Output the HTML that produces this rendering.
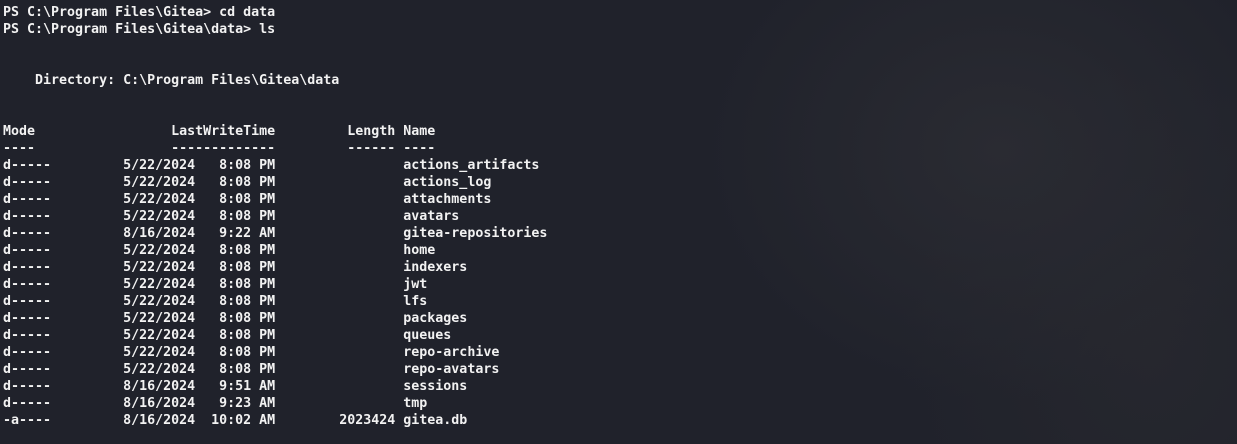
<html><head><style>
body{margin:0;width:1237px;height:444px;overflow:hidden;background:#20222b;
background-image:radial-gradient(ellipse 300px 250px at 1000px 150px,#2a2b32,rgba(0,0,0,0)),radial-gradient(ellipse 250px 300px at 1150px 350px,#26272e,rgba(0,0,0,0));}
pre{margin:0;position:absolute;left:3px;top:4px;font-family:"DejaVu Sans Mono","Liberation Mono",monospace;font-weight:bold;font-size:13.3px;line-height:17px;color:#f2f2f2;}
</style></head><body><pre>PS C:\Program Files\Gitea&gt; cd data
PS C:\Program Files\Gitea\data&gt; ls


    Directory: C:\Program Files\Gitea\data


Mode                 LastWriteTime         Length Name
----                 -------------         ------ ----
d-----         5/22/2024   8:08 PM                actions_artifacts
d-----         5/22/2024   8:08 PM                actions_log
d-----         5/22/2024   8:08 PM                attachments
d-----         5/22/2024   8:08 PM                avatars
d-----         8/16/2024   9:22 AM                gitea-repositories
d-----         5/22/2024   8:08 PM                home
d-----         5/22/2024   8:08 PM                indexers
d-----         5/22/2024   8:08 PM                jwt
d-----         5/22/2024   8:08 PM                lfs
d-----         5/22/2024   8:08 PM                packages
d-----         5/22/2024   8:08 PM                queues
d-----         5/22/2024   8:08 PM                repo-archive
d-----         5/22/2024   8:08 PM                repo-avatars
d-----         8/16/2024   9:51 AM                sessions
d-----         8/16/2024   9:23 AM                tmp
-a----         8/16/2024  10:02 AM        2023424 gitea.db
</pre></body></html>
